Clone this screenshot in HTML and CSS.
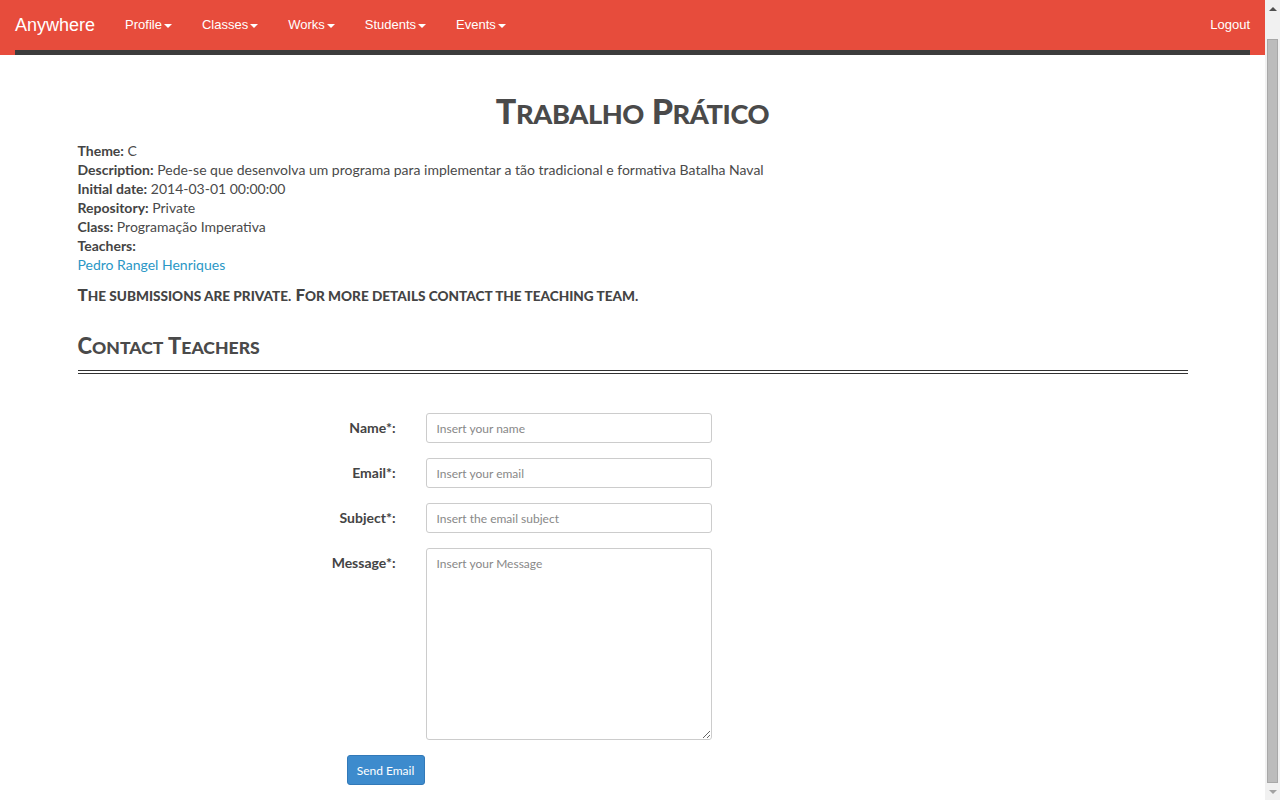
FILE: index.html
```html
<!DOCTYPE html>
<html lang="pt">
<head>
<meta charset="utf-8">
<title>Anywhere - Trabalho Prático</title>
<link rel="stylesheet" href="styles.css">
</head>
<body>
<div class="page">
  <nav class="navbar">
    <div class="navbar-inner">
      <a class="brand" href="#">Anywhere</a>
      <ul class="nav">
        <li><a href="#">Profile<span class="caret"></span></a></li>
        <li><a href="#">Classes<span class="caret"></span></a></li>
        <li><a href="#">Works<span class="caret"></span></a></li>
        <li><a href="#">Students<span class="caret"></span></a></li>
        <li><a href="#">Events<span class="caret"></span></a></li>
      </ul>
      <a class="logout" href="#">Logout</a>
    </div>
  </nav>

  <main class="container">
    <h1 class="title">T<span class="sc">rabalho</span> P<span class="sc">rático</span></h1>
    <div class="details">
      <div><b>Theme:</b> C</div>
      <div><b>Description:</b> Pede-se que desenvolva um programa para implementar a tão tradicional e formativa Batalha Naval</div>
      <div><b>Initial date:</b> 2014-03-01 00:00:00</div>
      <div><b>Repository:</b> Private</div>
      <div><b>Class:</b> Programação Imperativa</div>
      <div><b>Teachers:</b></div>
      <div><a class="link" href="#">Pedro Rangel Henriques</a></div>
    </div>
    <h4 class="notice">T<span class="sc">he submissions are private.</span> F<span class="sc">or more details contact the teaching team.</span></h4>

    <h3 class="section-title">C<span class="sc">ontact</span> T<span class="sc">eachers</span></h3>

    <form class="contact-form">
      <label class="form-label" for="name">Name*:</label>
      <input class="form-control" id="name" type="text" placeholder="Insert your name">
      <label class="form-label" for="email">Email*:</label>
      <input class="form-control" id="email" type="text" placeholder="Insert your email">
      <label class="form-label" for="subject">Subject*:</label>
      <input class="form-control" id="subject" type="text" placeholder="Insert the email subject">
      <label class="form-label" for="message">Message*:</label>
      <textarea class="form-control textarea" id="message" placeholder="Insert your Message"></textarea>
      <div class="actions"><button type="button" class="btn">Send Email</button></div>
    </form>
  </main>
</div>
<div class="scrollbar" aria-hidden="true">
  <div class="sb-arrow sb-up"></div>
  <div class="sb-track"><div class="sb-thumb"></div></div>
  <div class="sb-arrow sb-down"></div>
</div>
</body>
</html>
```

FILE: styles.css
```css
html, body {
  margin: 0;
  padding: 0;
}
body {
  display: flex;
  align-items: flex-start;
  font-family: Lato, "Open Sans", sans-serif;
  font-size: 14px;
  color: #4a4a4a;
  background: #fff;
}
.page {
  flex: 1;
  min-width: 0;
}

/* Fake scrollbar */
.scrollbar {
  width: 15px;
  height: 800px;
  background: #f1f1f1;
  display: flex;
  flex-direction: column;
  flex-shrink: 0;
}
.sb-arrow {
  height: 17px;
  display: flex;
  align-items: center;
  justify-content: center;
}
.sb-up::before,
.sb-down::before {
  content: "";
  width: 0;
  height: 0;
  border-left: 4px solid transparent;
  border-right: 4px solid transparent;
}
.sb-up::before {
  border-bottom: 4px solid #505050;
}
.sb-down::before {
  border-top: 4px solid #a3a3a3;
}
.sb-track {
  flex: 1;
  padding: 22px 2px 0 2px;
  display: flex;
}
.sb-thumb {
  flex: 1;
  background: #bcbcbc;
  border: 1px solid #a8a8a8;
}

/* Navbar */
.navbar {
  background: #e74c3c;
  padding: 0 15px;
}
.navbar-inner {
  display: flex;
  align-items: center;
  height: 50px;
  border-bottom: 5px solid #3c3c3c;
}
.brand {
  font-family: "Liberation Sans", Arial, sans-serif;
  font-size: 18px;
  color: #fff;
  text-decoration: none;
  padding-right: 15px;
  line-height: 50px;
}
.nav {
  display: flex;
  list-style: none;
  margin: 0;
  padding: 0;
  flex: 1;
}
.nav a, .logout {
  font-family: "Liberation Sans", Arial, sans-serif;
  font-size: 13px;
  color: #fff;
  text-decoration: none;
  line-height: 50px;
  display: block;
}
.nav a {
  padding: 0 15px;
}
.caret {
  display: inline-block;
  width: 0;
  height: 0;
  margin-left: 2px;
  vertical-align: middle;
  border-top: 4px solid #fff;
  border-left: 4px solid transparent;
  border-right: 4px solid transparent;
}

/* Content */
.container {
  width: 1110px;
  margin: 0 auto;
  padding-bottom: 10px;
}
.sc {
  text-transform: uppercase;
  font-size: 0.8em;
  line-height: 1;
}
.title {
  font-weight: 900;
  font-size: 34px;
  letter-spacing: -0.4px;
  text-align: center;
  margin: 36px 0 10px;
  line-height: 40px;
  color: #4a4a4a;
}
.details {
  line-height: 19px;
}
.details b {
  color: #444;
}
.link {
  color: #2a97c6;
  text-decoration: none;
}
.notice {
  font-weight: 900;
  font-size: 17px;
  line-height: 20px;
  margin: 11px 0 0;
  color: #444;
}
.section-title {
  font-weight: 900;
  font-size: 22px;
  line-height: 30px;
  margin: 26px 0 0;
  padding-bottom: 9px;
  border-bottom: 4px double #333;
  color: #4a4a4a;
}

/* Form */
.contact-form {
  display: grid;
  grid-template-columns: 318px 286px;
  column-gap: 30px;
  row-gap: 15px;
  margin-top: 39px;
}
.form-label {
  text-align: right;
  font-weight: bold;
  font-size: 14px;
  color: #444;
  padding-top: 7px;
  line-height: 16px;
}
.form-control {
  box-sizing: border-box;
  width: 286px;
  height: 30px;
  border: 1px solid #ccc;
  border-radius: 3px;
  padding: 4px 10px;
  font-family: Lato, "Open Sans", sans-serif;
  font-size: 12px;
  color: #555;
  margin: 0;
}
.form-control::placeholder {
  color: #888;
}
.textarea {
  height: 192px;
  resize: vertical;
  padding-top: 7px;
}
.actions {
  grid-column: 1 / 3;
  padding-left: 269px;
}
.btn {
  width: 78px;
  height: 30px;
  background: #3d8bcd;
  border: 1px solid #3279b8;
  border-radius: 3px;
  color: #fff;
  font-family: Lato, "Open Sans", sans-serif;
  font-size: 12px;
  padding: 0;
}
```
